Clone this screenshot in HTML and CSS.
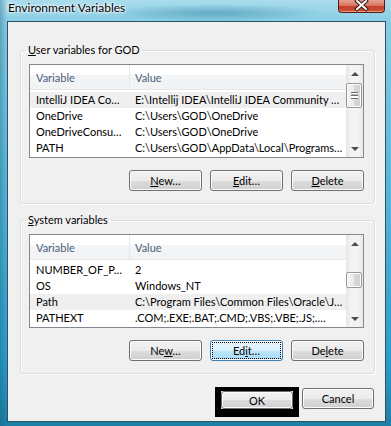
FILE: index.html
```html
<!doctype html>
<html>

<head>
  <title>Environment Variables</title>
  <meta http-equiv="Content-Type" content="text/html; charset=UTF-8">
  <link rel="stylesheet" href="styles.css">
</head>

<body>
  <div class="window">
    <div class="titlebar">
      <span class="title">Environment Variables</span>
      <div class="close">
        <svg width="45" height="12" viewBox="0 0 45 12">
          <path d="M18 1 L27 9 M27 1 L18 9" stroke="#3a1a14" stroke-width="4" stroke-linecap="square" />
          <path d="M18 1 L27 9 M27 1 L18 9" stroke="#fff" stroke-width="2" stroke-linecap="square" />
        </svg>
      </div>
    </div>

    <div class="client">
      <fieldset class="group group-user">
        <legend><u>U</u>ser variables for GOD</legend>
        <div class="list">
          <div class="list-main">
            <div class="list-head">
              <span class="col-var">Variable</span>
              <span class="col-val">Value</span>
            </div>
            <div class="list-body">
              <div class="row selected">
                <span class="col-var">IntelliJ IDEA Co…</span>
                <span class="col-val">E:\Intellij IDEA\IntelliJ IDEA Community …</span>
              </div>
              <div class="row">
                <span class="col-var">OneDrive</span>
                <span class="col-val">C:\Users\GOD\OneDrive</span>
              </div>
              <div class="row">
                <span class="col-var">OneDriveConsu…</span>
                <span class="col-val">C:\Users\GOD\OneDrive</span>
              </div>
              <div class="row">
                <span class="col-var">PATH</span>
                <span class="col-val">C:\Users\GOD\AppData\Local\Programs…</span>
              </div>
            </div>
          </div>
          <div class="scrollbar">
            <div class="arrow up"></div>
            <div class="track">
              <div class="thumb thumb-user"><span class="grip"></span></div>
            </div>
            <div class="arrow down"></div>
          </div>
        </div>
        <div class="buttons">
          <button class="btn"><u>N</u>ew…</button>
          <button class="btn"><u>E</u>dit…</button>
          <button class="btn"><u>D</u>elete</button>
        </div>
      </fieldset>

      <fieldset class="group group-system">
        <legend><u>S</u>ystem variables</legend>
        <div class="list">
          <div class="list-main">
            <div class="list-head">
              <span class="col-var">Variable</span>
              <span class="col-val">Value</span>
            </div>
            <div class="list-body">
              <div class="row">
                <span class="col-var">NUMBER_OF_P…</span>
                <span class="col-val">2</span>
              </div>
              <div class="row">
                <span class="col-var">OS</span>
                <span class="col-val">Windows_NT</span>
              </div>
              <div class="row selected">
                <span class="col-var">Path</span>
                <span class="col-val">C:\Program Files\Common Files\Oracle\J…</span>
              </div>
              <div class="row">
                <span class="col-var">PATHEXT</span>
                <span class="col-val">.COM;.EXE;.BAT;.CMD;.VBS;.VBE;.JS;.…</span>
              </div>
            </div>
          </div>
          <div class="scrollbar">
            <div class="arrow up"></div>
            <div class="track">
              <div class="thumb thumb-system"></div>
            </div>
            <div class="arrow down"></div>
          </div>
        </div>
        <div class="buttons">
          <button class="btn">Ne<u>w</u>…</button>
          <button class="btn focused">Ed<u>i</u>t…</button>
          <button class="btn">De<u>l</u>ete</button>
        </div>
      </fieldset>

      <div class="footer">
        <div class="marker">
          <button class="btn ok">OK</button>
        </div>
        <button class="btn cancel">Cancel</button>
      </div>
    </div>
  </div>
</body>

</html>
```

FILE: styles.css
```css
html,
body {
  margin: 0;
  background-color: #2aa6d4;
  font-family: 'Lato', 'Liberation Sans', sans-serif;
  font-size: 11px;
  color: #000;
}

.window {
  width: 391px;
  height: 426px;
  display: flex;
  flex-direction: column;
  overflow: hidden;
  background:
    radial-gradient(ellipse 110px 9px at 215px 13px, rgba(40, 120, 150, .45), rgba(40, 120, 150, 0)),
    linear-gradient(to right, rgba(20, 90, 120, .35) 0, rgba(20, 90, 120, 0) 7px),
    linear-gradient(to bottom, #a9dced 0, #86cde4 22px, #56b6d8 45%, #2b9ccb 85%, #1e7fa6 100%);
}

.titlebar {
  height: 21px;
  display: flex;
  align-items: flex-start;
  padding-left: 8px;
}

.title {
  font-size: 12px;
  line-height: 16px;
  text-shadow: 0 0 5px #fff, 0 0 3px #fff, 0 0 2px #fff;
}

.close {
  margin-left: auto;
  margin-right: 6px;
  width: 45px;
  height: 12px;
  border: 1px solid #5e1a10;
  border-top: none;
  border-radius: 0 0 4px 4px;
  background: linear-gradient(#e6a291 0, #d9765e 45%, #c2402a 55%, #c95438 100%);
  box-shadow: inset 0 -1px 0 rgba(255, 200, 180, .6);
}

.close svg {
  display: block;
}

.client {
  flex: 1;
  margin: 0 5px 4px 7px;
  border: 1px solid #2d5264;
  background-color: #f0f0f0;
  display: flex;
  flex-direction: column;
}

.group {
  margin: 20px 10px 0 12px;
  padding: 0 10px 12px 8px;
  border: 1px solid #d5dfe5;
  border-radius: 3px;
  box-shadow: 1px 1px 0 #fff, inset 1px 1px 0 #fff;
  min-width: 0;
}

.group-system {
  margin-top: 8px;
}

.group legend {
  padding: 0 2px;
  margin-left: -3px;
  line-height: 16px;
}

.list {
  margin-top: 6px;
  height: 94px;
  box-sizing: border-box;
  border: 1px solid #828790;
  background-color: #fff;
  display: flex;
}

.list-main {
  flex: 1;
  min-width: 0;
}

.list-head {
  height: 25px;
  box-sizing: border-box;
  display: flex;
  align-items: stretch;
  color: #4c607a;
  background: linear-gradient(#fff 0, #fff 40%, #f4f5f7 41%, #f1f2f4 100%);
  border-bottom: 1px solid #e3e6ea;
}

.list-head span {
  display: flex;
  align-items: center;
}

.col-var {
  width: 100px;
  box-sizing: border-box;
  padding-left: 6px;
  flex: none;
  white-space: nowrap;
}

.list-head .col-var {
  border-right: 1px solid #e3e8ee;
}

.col-val {
  padding-left: 5px;
  white-space: nowrap;
  overflow: hidden;
}

.list-body {
  padding-top: 2px;
}

.row {
  height: 16px;
  line-height: 16px;
  display: flex;
}

.row.selected {
  background-color: #efefef;
}

.scrollbar {
  width: 17px;
  flex: none;
  display: flex;
  flex-direction: column;
  background: linear-gradient(to right, #e6e6e6 0, #f3f3f3 30%, #f3f3f3 70%, #e9e9e9 100%);
}

.arrow {
  height: 17px;
  flex: none;
  display: flex;
  align-items: center;
  justify-content: center;
}

.arrow::before {
  content: '';
  border-left: 4px solid transparent;
  border-right: 4px solid transparent;
}

.arrow.up::before {
  border-bottom: 4px solid #4d4d4d;
}

.arrow.down::before {
  border-top: 4px solid #4d4d4d;
}

.track {
  flex: 1;
  padding-top: 1px;
}

.thumb {
  height: 25px;
  box-sizing: border-box;
  margin: 0 1px 0 0;
  border: 1px solid #989898;
  border-radius: 2px;
  background: linear-gradient(to right, #f2f2f2 0, #ebebeb 50%, #d9d9d9 51%, #d0d0d0 100%);
  box-shadow: inset 0 0 0 1px #fcfcfc;
  display: flex;
  align-items: center;
  justify-content: center;
}

.thumb-system {
  height: 16px;
  margin-top: 19px;
}

.grip {
  width: 7px;
  height: 5px;
  border-top: 1px solid #6b6b6b;
  border-bottom: 1px solid #6b6b6b;
  background: linear-gradient(#fff 0, #fff 1px, #6b6b6b 2px, #6b6b6b 3px, #fff 3px);
}

.buttons {
  display: flex;
  justify-content: flex-end;
  gap: 8px;
  margin-top: 12px;
}

.btn {
  width: 73px;
  height: 21px;
  padding: 0;
  box-sizing: border-box;
  border: 1px solid #707070;
  border-radius: 3px;
  background: linear-gradient(#f2f2f2 0, #ebebeb 50%, #dddddd 51%, #cfcfcf 100%);
  box-shadow: inset 0 0 0 1px #fcfcfc;
  font-family: inherit;
  font-size: 11px;
  line-height: 17px;
  color: #000;
}

.btn.focused {
  border-color: #3c7fb1;
  background: linear-gradient(#eaf6fd 0, #d9f0fc 50%, #bee6fd 51%, #a7d9f5 100%);
  outline: 1px dotted #000;
  outline-offset: -3px;
}

.footer {
  display: flex;
  justify-content: flex-end;
  align-items: flex-start;
  gap: 3px;
  margin: 13px 11px 0 0;
}

.marker {
  border-style: solid;
  border-color: #000;
  border-width: 4px 6px 8px 6px;
  display: flex;
}

.btn.ok {
  width: 72px;
  height: 18px;
  line-height: 15px;
}

.btn.cancel {
  width: 72px;
  margin-top: 1px;
}
```
